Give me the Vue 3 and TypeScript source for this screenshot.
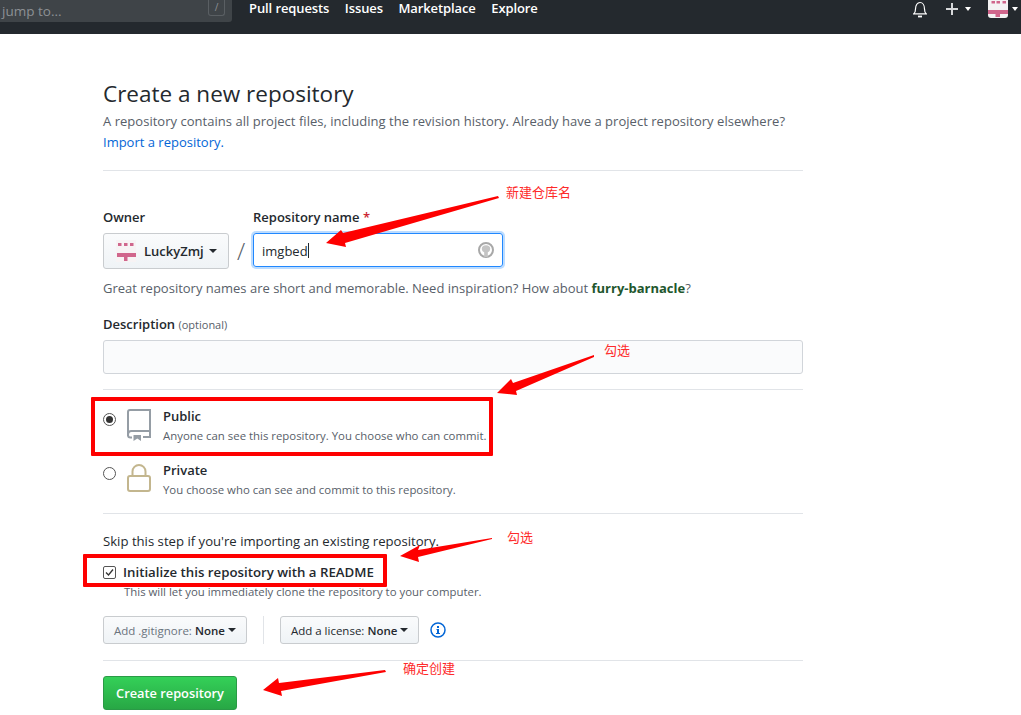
<script setup lang="ts">
const navLinks = ['Pull requests', 'Issues', 'Marketplace', 'Explore']

// red arrows drawn on top of the screenshot: tail, shaft, bottom barb, tip, top barb
const arrows = [
  '498,196 499,198 345,243 346,247 326,243 341,230 343,233',
  '594,355 594,357 516,391 517,395 497,393 511,379 513,383',
  '492,538 492,539 418,557 419,562 400,556 420,545 418,550',
  '385,670 386,672 281,691 282,696 263,690 278,678 279,683',
]
</script>

<template>
  <div class="page">
    <header class="topbar">
      <div class="search">
        <span class="search-text">jump to...</span>
        <span class="slash">/</span>
      </div>
      <nav class="nav">
        <a v-for="link in navLinks" :key="link">{{ link }}</a>
      </nav>
      <div class="top-icons">
        <svg class="bell" width="14" height="17" viewBox="0 0 14 17" fill="none" stroke="#fff" stroke-width="1.200">
          <path d="M.8 12.800c1.300-1 1.700-2.200 1.700-4.800C2.500 4 4.500 1.500 7 1.500S11.500 4 11.500 8c0 2.600.4 3.800 1.700 4.800z" />
          <path d="M5 15.500h4" stroke-width="1.800" />
        </svg>
        <svg class="plus" width="12" height="12" viewBox="0 0 12 12"><path d="M5 0h2v5h5v2H7v5H5V7H0V5h5z" fill="#d6d8da" /></svg>
        <span class="caret white"></span>
        <span class="avatar">
          <svg width="20" height="18" viewBox="0 0 20 18">
            <rect width="20" height="18" fill="#f4f2f3" />
            <path d="M3.500 1H7v2.500H3.500zM8.500 1H12v2.500H8.500zM14.500 1H18v2.500h-3.500zM0 10h20v4H0zM7.500 14H12v3H7.500z" fill="#d0668c" />
          </svg>
        </span>
        <span class="caret white"></span>
      </div>
    </header>

    <main class="content">
      <section class="intro">
        <h1>Create a new repository</h1>
        <p class="lead">A repository contains all project files, including the revision history. Already have a project repository elsewhere?</p>
        <a class="link">Import a repository.</a>
      </section>

      <section class="owner-block">
        <div class="owner-row">
          <div class="field">
            <label>Owner</label>
            <button class="btn owner-btn">
              <svg width="20" height="22" viewBox="0 0 20 22">
                <rect width="20" height="22" fill="#f7f3f4" />
                <path d="M2 3h3.500v3H2zM8 3h3.500v3H8zM14 3h3.500v3H14zM1 13h19v4H1zM8 17h3.500v4H8z" fill="#d0668c" />
              </svg>
              LuckyZmj
              <span class="caret"></span>
            </button>
          </div>
          <span class="sep">/</span>
          <div class="field">
            <label>Repository name <span class="req">*</span></label>
            <div class="name-input">
              <span>imgbed</span><i class="cursor"></i>
              <svg class="cat" width="16" height="16" viewBox="0 0 16 16">
                <circle cx="8" cy="8" r="7" fill="#fff" stroke="#a8a8a8" stroke-width="2" />
                <ellipse cx="8" cy="6.800" rx="4.200" ry="3.600" fill="#c4c4c4" />
                <rect x="6.200" y="9" width="3.600" height="6" fill="#c4c4c4" />
              </svg>
            </div>
          </div>
        </div>
        <p class="hint">Great repository names are short and memorable. Need inspiration? How about <strong class="suggest">furry-barnacle</strong>?</p>
        <label class="desc-label">Description <span class="optional">(optional)</span></label>
        <div class="desc-input"></div>
      </section>

      <section class="visibility">
        <div class="radio-row">
          <span class="radio checked"></span>
          <svg class="vis-icon book" width="24" height="32" viewBox="0 0 24 32" fill="none" stroke="#959da5" stroke-width="2">
            <path d="M1 27V3a2 2 0 0 1 2-2h20v27h-7" />
            <path d="M1 26c0-2.500 1.500-4 3.500-4H23" />
            <path d="M1 26c0 1.500 1 2.500 2.500 2.500H5" />
            <path d="M6.500 26H14v6l-3.700-2.500L6.500 32z" fill="#959da5" stroke="none" />
          </svg>
          <div>
            <strong>Public</strong>
            <small>Anyone can see this repository. You choose who can commit.</small>
          </div>
        </div>
        <div class="radio-row">
          <span class="radio"></span>
          <svg class="vis-icon lock" width="24" height="28" viewBox="0 0 24 28" fill="none" stroke="#c3b68e" stroke-width="2">
            <rect x="1" y="12" width="22" height="15" rx="2" />
            <path d="M5.500 12V7.500a6.500 6.500 0 0 1 13 0V12" />
          </svg>
          <div>
            <strong>Private</strong>
            <small>You choose who can see and commit to this repository.</small>
          </div>
        </div>
      </section>

      <section class="init">
        <p class="skip">Skip this step if you're importing an existing repository.</p>
        <div class="check-row">
          <svg width="13" height="13" viewBox="0 0 13 13">
            <rect x=".5" y=".5" width="12" height="12" rx="1.500" fill="#fff" stroke="#555" />
            <path d="M3 6.500l2.500 2.500L10 3.500" fill="none" stroke="#333" stroke-width="1.300" />
          </svg>
          <strong>Initialize this repository with a README</strong>
        </div>
        <small class="check-note">This will let you immediately clone the repository to your computer.</small>
        <div class="add-row">
          <button class="btn small"><span class="muted">Add .gitignore:</span> None <span class="caret"></span></button>
          <span class="vline"></span>
          <button class="btn small"><span class="muted2">Add a license:</span> None <span class="caret"></span></button>
          <svg class="info" width="16" height="16" viewBox="0 0 16 16" fill="none">
            <circle cx="8" cy="8" r="7" stroke="#0366d6" stroke-width="1.500" />
            <path d="M7 4h2v2H7zM6.500 7H9v4h1v1H6v-1h1V8h-.5z" fill="#0366d6" />
          </svg>
        </div>
      </section>

      <section class="submit">
        <button class="create">Create repository</button>
      </section>
    </main>

    <div class="marks">
      <svg class="arrows" width="1021" height="715" viewBox="0 0 1021 715">
        <polygon v-for="pts in arrows" :key="pts" :points="pts" fill="#fe0000" />
      </svg>
      <span class="box box-public"></span>
      <span class="box box-readme"></span>
      <span class="note note-1">新建仓库名</span>
      <span class="note note-2">勾选</span>
      <span class="note note-3">勾选</span>
      <span class="note note-4">确定创建</span>
    </div>
  </div>
</template>

<style scoped>
.page {
  position: relative;
  width: 1021px;
  height: 715px;
  overflow: hidden;
  background: #fff;
  color: #24292e;
  font-family: "Open Sans", "Noto Sans", sans-serif;
  font-size: 13px;
}

.topbar {
  height: 34px;
  background: #24292e;
  display: flex;
  align-items: flex-start;
}

.search {
  width: 232px;
  height: 22px;
  background: #3f4448;
  border-radius: 0 0 3px 0;
  display: flex;
  align-items: center;
  justify-content: space-between;
  padding: 0 7px 0 2px;
  box-sizing: border-box;
  color: #8d9195;
  font-size: 13.500px;
}

.slash {
  width: 17px;
  height: 16px;
  margin-top: -6px;
  border: 1px solid #5a5f63;
  border-top: 0;
  border-radius: 0 0 3px 3px;
  box-sizing: border-box;
  text-align: center;
  font-size: 10px;
  line-height: 15px;
}

.nav {
  display: flex;
  gap: 15.500px;
  margin-left: 17px;
  color: #fff;
  font-weight: 600;
  font-size: 13px;
  letter-spacing: -0.1px;
  line-height: 17px;
}

.top-icons {
  margin-left: auto;
  padding-right: 3px;
  height: 18px;
  display: flex;
  align-items: center;
}

.bell {
  margin-right: 19px;
}

.plus {
  margin-right: 7px;
}

.avatar {
  width: 20px;
  height: 18px;
  margin-left: 17px;
  margin-right: 4px;
  border-radius: 0 0 3px 3px;
  overflow: hidden;
}

.avatar svg {
  display: block;
}

.caret {
  display: inline-block;
  width: 0;
  height: 0;
  border: 4px solid transparent;
  border-top-color: #24292e;
  border-bottom: 0;
  vertical-align: middle;
}

.caret.white {
  border-top-color: #fff;
  border-width: 4px 3.500px 0;
}

.content {
  width: 700px;
  margin-left: 103px;
}

.intro {
  padding: 45px 0 17px;
  border-bottom: 1px solid #e1e4e8;
}

h1 {
  margin: 0;
  font-size: 22.500px;
  font-weight: 400;
  line-height: 30px;
}

.lead {
  margin: 2px 0 0;
  color: #586069;
  line-height: 21px;
  letter-spacing: 0.03px;
  white-space: nowrap;
}

.link {
  color: #0366d6;
  line-height: 21px;
  display: block;
}

.owner-block {
  padding: 37px 0 15px;
  border-bottom: 1px solid #e1e4e8;
}

.owner-row {
  display: flex;
  align-items: flex-start;
}

.field label {
  display: block;
  font-weight: 600;
  line-height: 18px;
  margin-bottom: 7px;
}

.req {
  color: #cb2431;
}

.btn {
  font: inherit;
  color: #24292e;
  background: linear-gradient(#fafbfc, #eff3f6);
  border: 1px solid #c9cccf;
  border-radius: 3px;
  display: flex;
  align-items: center;
  box-sizing: border-box;
  padding: 0;
  white-space: nowrap;
}

.owner-btn {
  width: 126px;
  height: 36px;
  font-weight: 600;
  gap: 8px;
  padding-left: 12px;
}

.owner-btn .caret {
  margin-left: -3px;
}

.sep {
  width: 24px;
  margin-top: 25px;
  text-align: center;
  font-size: 24px;
  font-weight: 300;
  color: #586069;
  line-height: 36px;
}

.name-input {
  position: relative;
  width: 250px;
  height: 34px;
  margin-top: 1px;
  box-sizing: border-box;
  border: 1px solid #2188ff;
  border-radius: 3px;
  box-shadow: 0 0 0 2px #bcdcff;
  padding: 1px 0 0 8px;
  line-height: 32px;
  display: flex;
  align-items: center;
}

.cursor {
  width: 1px;
  height: 15px;
  background: #24292e;
}

.cat {
  position: absolute;
  right: 8px;
  top: 8px;
}

.hint {
  margin: 9px 0 0;
  line-height: 20px;
  color: #586069;
}

.suggest {
  color: #22562d;
  font-weight: 700;
}

.desc-label {
  display: block;
  margin-top: 17px;
  font-weight: 600;
  line-height: 18px;
}

.optional {
  color: #586069;
  font-size: 11px;
  font-weight: 400;
}

.desc-input {
  height: 34px;
  margin-top: 6px;
  box-sizing: border-box;
  background: #fafbfc;
  border: 1px solid #d1d5da;
  border-radius: 3px;
}

.visibility {
  padding: 17px 0 0;
  display: flex;
  flex-direction: column;
  gap: 2px;
  border-bottom: 1px solid #e1e4e8;
}

.radio-row {
  display: flex;
  align-items: flex-start;
  height: 52px;
}

.radio {
  width: 13px;
  height: 13px;
  margin-top: 6px;
  border: 1px solid #555;
  border-radius: 50%;
  box-sizing: border-box;
  position: relative;
  flex: none;
}

.radio.checked::after {
  content: "";
  position: absolute;
  inset: 2px;
  border-radius: 50%;
  background: #333;
}

.vis-icon {
  margin-left: 11px;
  margin-right: 12px;
  flex: none;
}

.book {
  margin-top: 2px;
}

.lock {
  margin-top: 3px;
}

.radio-row strong {
  display: block;
  font-weight: 600;
  line-height: 18px;
}

.radio-row small {
  display: block;
  margin-top: 3px;
  color: #586069;
  font-size: 11.400px;
  line-height: 16px;
}

.init {
  padding-bottom: 16px;
  border-bottom: 1px solid #e1e4e8;
}

.skip {
  margin: 18px 0 0;
  color: #24292e;
  font-size: 13.150px;
  line-height: 18px;
}

.check-row {
  display: flex;
  align-items: center;
  gap: 7px;
  margin-top: 13px;
  height: 18px;
}

.check-row strong {
  font-weight: 600;
  font-size: 13.250px;
}

.check-note {
  display: block;
  margin: 3px 0 0 21px;
  color: #586069;
  font-size: 11.400px;
  line-height: 16px;
}

.add-row {
  display: flex;
  align-items: center;
  margin-top: 16px;
}

.btn.small {
  height: 28px;
  padding: 0 10px;
  gap: 3px;
  font-size: 11.500px;
  font-weight: 600;
}

.muted {
  color: #6a737d;
  font-weight: 400;
}

.muted2 {
  font-weight: 400;
}

.vline {
  width: 1px;
  height: 28px;
  margin: 0 16px;
  background: #e1e4e8;
}

.info {
  margin-left: 11px;
}

.submit {
  padding-top: 15px;
}

.create {
  width: 134px;
  height: 34px;
  font: inherit;
  font-size: 12.800px;
  font-weight: 600;
  color: #fff;
  background: linear-gradient(#34d058, #28a745);
  border: 1px solid #2a9a46;
  border-radius: 3px;
  padding: 0;
}

.marks {
  position: absolute;
  inset: 0;
  pointer-events: none;
}

.arrows {
  position: absolute;
  left: 0;
  top: 0;
}

.box {
  position: absolute;
  border: 4px solid #fe0000;
  box-sizing: border-box;
  border-radius: 1px;
}

.box-public {
  left: 91px;
  top: 397px;
  width: 402px;
  height: 59px;
}

.box-readme {
  left: 83px;
  top: 554px;
  width: 304px;
  height: 33px;
}

.note {
  position: absolute;
  color: #fe2a2a;
  font-family: "Noto Sans CJK SC", sans-serif;
  font-size: 13px;
  line-height: 18px;
}

.note-1 { left: 506px; top: 183px; }
.note-2 { left: 604px; top: 341px; }
.note-3 { left: 507px; top: 528px; }
.note-4 { left: 403px; top: 659px; }
</style>
